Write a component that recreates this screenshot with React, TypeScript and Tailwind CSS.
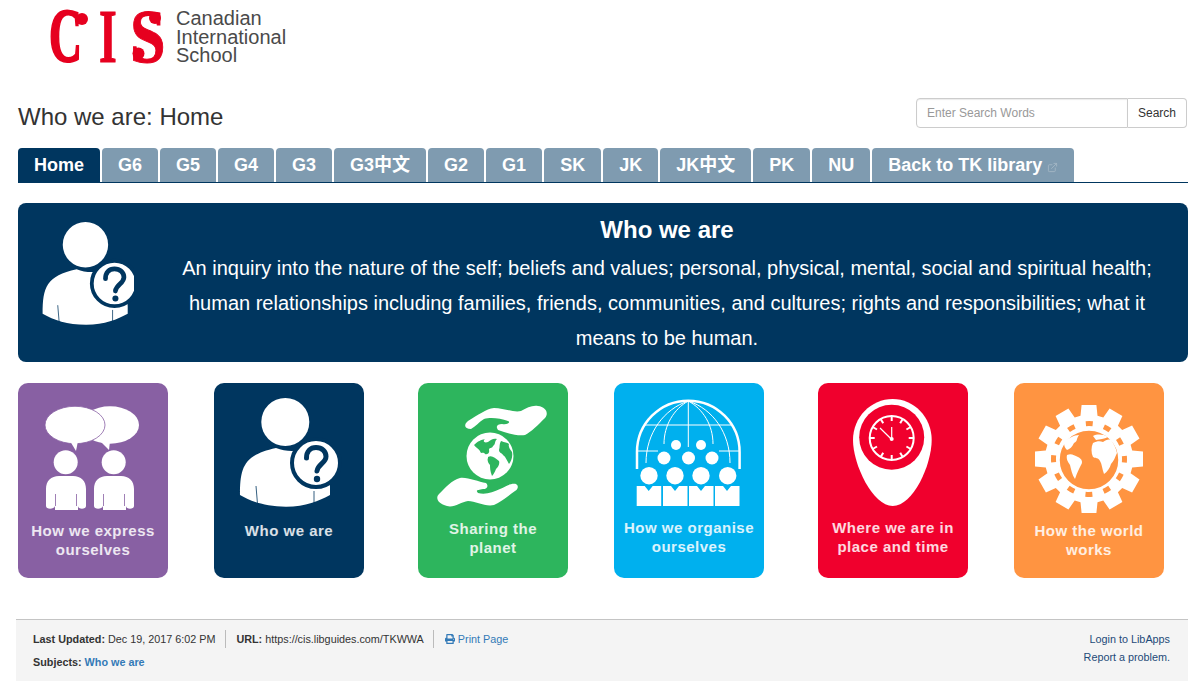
import { FaPrint } from "react-icons/fa";
import { ExternalLink } from "lucide-react";
import type { ReactNode } from "react";

const navy = "#00365f";

const tabs = ["G6", "G5", "G4", "G3", "G3中文", "G2", "G1", "SK", "JK", "JK中文", "PK", "NU"];

function gearPath(cx: number, cy: number, outer: number, inner: number, teeth: number) {
  const pts: string[] = [];
  const step = (Math.PI * 2) / teeth;
  for (let i = 0; i < teeth; i++) {
    const a = i * step - Math.PI / 2;
    const corners: [number, number][] = [
      [inner, a - step * 0.37],
      [outer, a - step * 0.26],
      [outer, a + step * 0.26],
      [inner, a + step * 0.37],
    ];
    corners.forEach(([r, t]) => {
      pts.push(`${(cx + r * Math.cos(t)).toFixed(1)} ${(cy + r * Math.sin(t)).toFixed(1)}`);
    });
  }
  return `M${pts.join("L")}Z`;
}

function PersonIcon({ bg }: { bg: string }) {
  return (
    <>
      <circle cx="71.3" cy="39" r="24" fill="#fff" />
      <path
        d="M26 112C26 84 30 72 62 65C72 69 84 69 92 65C108 72 116 88 116 104V112C105 118 92 123.5 72 123.7C52 123.5 38 119 26 112Z"
        fill="#fff"
      />
      <path d="M42 103L43.5 121M100 108V120" stroke={bg} strokeWidth="0.8" fill="none" />
      <circle cx="102" cy="80" r="24" fill="#fff" stroke={bg} strokeWidth="4" />
      <path
        d="M92.5 75C92.5 68 96.500 64.500 102 64.500C108 64.500 112 68.500 112 73.500C112 80 104 81 103 88"
        stroke={bg}
        strokeWidth="5"
        fill="none"
        strokeLinecap="round"
      />
      <circle cx="103" cy="96" r="3.200" fill={bg} />
    </>
  );
}

function SpeechIcon() {
  const bg = "#8860a3";
  return (
    <>
      <ellipse cx="92" cy="42" rx="29" ry="18.700" fill="#fff" />
      <path d="M82 58L91 67L92 58Z" fill="#fff" />
      <ellipse cx="57" cy="42" rx="30" ry="18.700" fill="#fff" stroke={bg} strokeWidth="0.8" />
      <path d="M52 58L58 68L60 58Z" fill="#fff" />
      <circle cx="47.700" cy="79.300" r="12" fill="#fff" />
      <circle cx="95.700" cy="79.300" r="12" fill="#fff" />
      {[0, 48].map((dx) => (
        <g key={dx} transform={`translate(${dx} 0)`}>
          <path
            d="M28 123V106C28 98 33 93 41 93H55C63 93 68 98 68 106V123C68 126.500 60 126.500 60 123V127H37V123C36 126.500 28 126.500 28 123Z"
            fill="#fff"
          />
          <path d="M37.500 111V123M58.500 111V123" stroke={bg} strokeWidth="0.8" />
        </g>
      ))}
    </>
  );
}

function HandsIcon() {
  const bg = "#2db55d";
  return (
    <>
      <path
        d="M50 38C60 32 68 26 76 25C86 25 96 30 103 28C109 25 114 22 120 23C128 24 131 30 127 35C120 42 113 49 107 52C98 53 89 50 80 47C77 43 80 41 84 41C90 42 93 39 90 38C82 35 72 34 66 36C61 39 57 44 53 46C47 46 45 42 50 38Z"
        fill="#fff"
      />
      <path
        d="M98 101C101 103 100 106 97 108C90 113 83 119 76 122C67 124 58 118 50 118C43 119 36 125 29 123C20 121 17 115 21 111C27 105 34 97 42 95C50 94 60 99 68 100C71 103 69 106 65 106C60 107 57 107 60 110C68 112 75 109 82 106C87 104 92 100 98 101Z"
        fill="#fff"
      />
      <circle cx="72" cy="73" r="23.500" fill="#fff" />
      <path
        d="M56 62C60 58 63 57 67 56C64 59 67 60 70 59C73 57 75 55 79 56C76 59 78 61 75 63C74 66 71 64 71 67C72 70 69 72 67 71C65 68 63 72 62 68C60 65 58 65 56 62ZM70 74C74 72 77 75 81 78C82 81 80 84 78 86C77 89 75 92 74 93C72 88 72 84 72 82C70 80 69 77 70 75ZM83 58C87 60 89 59 91 61C90 64 92 66 94 69C95 74 93 78 91 81C89 78 88 74 85 72C84 70 81 70 81 67C82 64 81 61 83 58Z"
        fill={bg}
      />
    </>
  );
}

function GlobePeopleIcon() {
  const white = "#fff";
  return (
    <>
      <path d="M23 86V69A51.300 51.300 0 0 1 125.600 69V86" stroke={white} strokeWidth="2.500" fill="none" />
      <g stroke={white} strokeWidth="1" fill="none">
        <path d="M74.300 18V64" />
        <path d="M50 61C50 42 60 26 74.300 18C89 26 99 42 99 61" />
        <path d="M32 80C32 50 50 26 74.300 18C99 26 116 50 116 80" />
        <path d="M31 42H117" />
        <path d="M24 68H44M105 68H125" />
      </g>
      {[[62, 62, 5], [87, 62, 5], [50, 75, 6.500], [74.500, 75, 6.500], [98, 75, 6.500], [35, 92.700, 8.700], [61, 92.700, 8.700], [87, 92.700, 8.700], [113.700, 92.700, 8.700]].map(([x, y, r]) => (
        <circle key={`${x}-${y}`} cx={x} cy={y} r={r} fill={white} />
      ))}
      {[22.700, 49, 75, 101].map((x) => (
        <path key={x} d={`M${x} 123V103H${x + 8}L${x + 12} 108L${x + 16} 103H${x + 24.500}V123Z`} fill={white} />
      ))}
    </>
  );
}

function PinIcon() {
  const bg = "#f0002d";
  return (
    <>
      <path d="M74.700 16C96 16 113.700 34 113.700 57C113.700 82 95 123 74.700 123C55 123 35 82 35 57C35 34 53 16 74.700 16Z" fill="#fff" />
      <circle cx="73.700" cy="54.300" r="32.500" fill={bg} />
      <circle cx="73.700" cy="55" r="22" fill="none" stroke="#fff" strokeWidth="2" />
      {Array.from({ length: 12 }).map((_, i) => (
        <line
          key={i}
          x1="73.700"
          y1="33"
          x2="73.700"
          y2="38"
          stroke="#fff"
          strokeWidth="2"
          transform={`rotate(${i * 30} 73.700 55)`}
        />
      ))}
      <path d="M62 45L73.700 56.500M73.700 56.500V44" stroke="#fff" strokeWidth="1.200" fill="none" />
      <circle cx="73.700" cy="56" r="2" fill="#fff" />
    </>
  );
}

function GearIcon() {
  const bg = "#ff9441";
  return (
    <>
      <path d={gearPath(75, 76, 54.500, 44, 12)} fill="#fff" />
      <circle cx="75" cy="76" r="40" fill="#fff" />
      <circle cx="75" cy="76" r="35.500" fill="none" stroke={bg} strokeWidth="5" strokeDasharray="7 11.590" strokeDashoffset="3.500" />
      <circle cx="75" cy="77" r="30" fill={bg} stroke="#fff" strokeWidth="1.500" />
      <path
        d="M79 60C83 58 86 58 89 59C92 57 94 56 97 57C100 61 102 65 103 70C101 74 100 78 97 81C96 85 93 89 90 91C88 86 88 81 86 78C84 74 82 76 79 74C77 70 77 64 79 60ZM79 53C83 51 89 51 94 54C90 56 86 56 82 57ZM53 72C57 70 60 72 64 74C68 76 69 79 67 82C65 86 63 90 61 96C58 92 57 86 56 82C54 79 52 76 53 72ZM50 60C54 55 60 52 65 52C62 56 64 58 60 60C58 64 56 66 53 67C51 65 50 63 50 60Z"
        fill="#fff"
      />
    </>
  );
}

const cards: { label: ReactNode; bg: string; icon: ReactNode; top: string }[][] = [
  [
    { label: <>How we express<br />ourselves</>, bg: "bg-[#8860a3]", icon: <SpeechIcon />, top: "pt-[8px]" },
    { label: <>Who we are</>, bg: "bg-[#00365f]", icon: <PersonIcon bg={navy} />, top: "pt-[8px]" },
  ],
  [
    { label: <>Sharing the<br />planet</>, bg: "bg-[#2db55d]", icon: <HandsIcon />, top: "pt-[6px]" },
    { label: <>How we organise<br />ourselves</>, bg: "bg-[#00b0ee]", icon: <GlobePeopleIcon />, top: "pt-[5px]" },
  ],
  [
    { label: <>Where we are in<br />place and time</>, bg: "bg-[#f0002d]", icon: <PinIcon />, top: "pt-[5px]" },
    { label: <>How the world<br />works</>, bg: "bg-[#ff9441]", icon: <GearIcon />, top: "pt-[8px]" },
  ],
];

function Logo() {
  return (
    <div className="flex items-start pl-[49px] pt-[10px] h-[98px]">
      <svg width="120" height="54" viewBox="0 0 120 54" className="block overflow-visible">
        <g fill="#e6001f" stroke="#e6001f" strokeWidth="0.6" fontFamily="'Liberation Serif', serif" fontWeight="700" fontSize="76">
          <text transform="translate(0 51) scale(0.6 1)" strokeWidth="2.200">C</text>
          <text transform="translate(50 51.500) scale(0.6 1)" strokeWidth="1">I</text>
          <text transform="translate(81 51.500) scale(0.84 1)" strokeWidth="1">S</text>
        </g>
        <circle cx="33" cy="9" r="6" fill="#e6001f" />
        <circle cx="106" cy="8" r="6" fill="#e6001f" />
        <circle cx="89.500" cy="43.500" r="6" fill="#e6001f" />
      </svg>
      <div className="ml-[7px] -mt-[1px] text-[20px] leading-[18.500px] text-[#4a4a4a]">
        Canadian<br />International<br />School
      </div>
    </div>
  );
}

export default function App() {
  return (
    <div className="w-[1198px] h-[699px] overflow-hidden bg-white font-['Liberation_Sans','Noto_Sans_CJK_SC',sans-serif] text-[#333]">
      <Logo />

      <div className="flex items-start justify-between pl-[18px] pr-[11px] h-[50px]">
        <h1 className="text-[24px] leading-[26px] mt-[6px]">Who we are: Home</h1>
        <div className="flex h-[30px] w-[271px] text-[12px]">
          <div className="flex-1 flex items-center pl-[10px] border border-[#ccc] rounded-l-[4px] text-[#999] shadow-[inset_0_1px_1px_rgba(0,0,0,0.08)]">
            Enter Search Words
          </div>
          <button className="w-[59px] border border-l-0 border-[#ccc] rounded-r-[4px] bg-white text-[#333]">Search</button>
        </div>
      </div>

      <div className="mx-[10px] ml-[18px] flex h-[35px] gap-[2px] border-b border-[#00365f] text-[18px] font-bold text-white">
        <div className="h-[34px] flex items-center px-[16px] rounded-t-[4px] bg-[#00365f]">Home</div>
        {tabs.map((t) => (
          <div key={t} className="h-[34px] flex items-center px-[16px] rounded-t-[4px] bg-[#7f9bb0]">{t}</div>
        ))}
        <div className="h-[34px] flex items-center px-[16px] rounded-t-[4px] bg-[#7f9bb0]">
          Back to TK library
          <ExternalLink size={11} className="ml-[5px] mt-[5px] text-[#a3b6c4]" />
        </div>
      </div>

      <div className="mt-[20px] ml-[18px] mr-[10px] h-[159px] flex rounded-[8px] bg-[#00365f] text-white">
        <div className="w-[128px] pl-[24px] pt-[19px]">
          <svg width="92" height="104" viewBox="26 15 96 110" className="block">
            <PersonIcon bg={navy} />
          </svg>
        </div>
        <div className="flex-1 text-center text-[20px] leading-[35px]">
          <div className="text-[24px] font-bold leading-[26px] mt-[14px] mb-[8px]">Who we are</div>
          <p>
            An inquiry into the nature of the self; beliefs and values; personal, physical, mental, social and spiritual health;<br />
            human relationships including families, friends, communities, and cultures; rights and responsibilities; what it<br />
            means to be human.
          </p>
        </div>
      </div>

      <div className="mt-[21px] ml-[18px] flex gap-[54px]">
        {cards.map((group, i) => (
          <div key={i} className="flex gap-[46px]">
            {group.map((c, j) => (
              <div key={j} className={`w-[150px] h-[195px] rounded-[10px] ${c.bg}`}>
                <svg width="150" height="130" viewBox="0 0 150 130" className="block">{c.icon}</svg>
                <div className={`${c.top} text-center text-[15px] leading-[19px] font-bold tracking-[0.5px] text-white/85`}>
                  {c.label}
                </div>
              </div>
            ))}
          </div>
        ))}
      </div>

      <div className="mt-[41px] ml-[16px] mr-[10px] h-[62px] flex justify-between border-t border-[#c4c4c4] bg-[#f4f4f4] pl-[17px] pr-[18px] text-[10.800px] leading-[14px]">
        <div>
          <div className="flex items-center h-[18px] mt-[10px]">
            <span><b>Last Updated:</b> Dec 19, 2017 6:02 PM</span>
            <span className="ml-[10px] pl-[10px] h-[18px] flex items-center border-l border-[#bbb]"><b>URL:</b>&nbsp;https://cis.libguides.com/TKWWA</span>
            <span className="ml-[9px] pl-[11px] h-[18px] flex items-center border-l border-[#bbb] text-[#337ab7]">
              <FaPrint size={10} className="mr-[3px]" />Print Page
            </span>
          </div>
          <div className="mt-[7px]"><b>Subjects:</b> <b className="text-[#337ab7]">Who we are</b></div>
        </div>
        <div className="text-right text-[#1d4a78] pt-[10px] leading-[18px]">
          Login to LibApps<br />Report a problem.
        </div>
      </div>
    </div>
  );
}
